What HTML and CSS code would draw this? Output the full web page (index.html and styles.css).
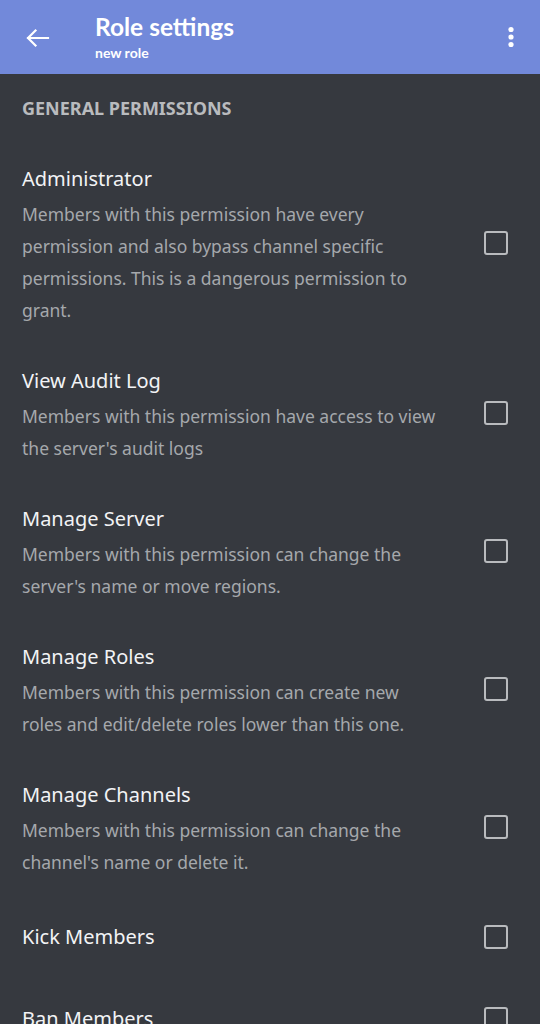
FILE: index.html
```html
<!DOCTYPE html>
<html lang="en">
<head>
    <meta charset="UTF-8">
    <meta name="viewport" content="width=device-width, initial-scale=1.0">
    <title>Role settings</title>
    <link rel="stylesheet" href="styles.css">
</head>
<body>
    <div id="app">
        <div id="topbar">
            <button class="icon-btn back-btn" aria-label="Back">
                <svg width="30" height="30" viewBox="0 0 30 30">
                    <path d="M27 15H7M14.5 7.5L7 15l7.5 7.5" fill="none" stroke="#fff" stroke-width="2.2" stroke-linecap="square"/>
                </svg>
            </button>
            <div class="topbar-titles">
                <div class="topbar-title">Role settings</div>
                <div class="topbar-subtitle">new role</div>
            </div>
            <button class="icon-btn menu-btn" aria-label="More">
                <svg width="10" height="24" viewBox="0 0 10 24">
                    <circle cx="5" cy="4.5" r="2.6" fill="#fff"/>
                    <circle cx="5" cy="12" r="2.6" fill="#fff"/>
                    <circle cx="5" cy="19.5" r="2.6" fill="#fff"/>
                </svg>
            </button>
        </div>

        <div id="permissions">
            <div class="section-title">General Permissions</div>

            <label class="perm">
                <div class="perm-text">
                    <div class="perm-name">Administrator</div>
                    <div class="perm-desc">Members with this permission have every permission and also bypass channel specific permissions. This is a dangerous permission to grant.</div>
                </div>
                <input type="checkbox" class="perm-check">
            </label>

            <label class="perm">
                <div class="perm-text">
                    <div class="perm-name">View Audit Log</div>
                    <div class="perm-desc">Members with this permission have access to view the server's audit logs</div>
                </div>
                <input type="checkbox" class="perm-check">
            </label>

            <label class="perm">
                <div class="perm-text">
                    <div class="perm-name">Manage Server</div>
                    <div class="perm-desc">Members with this permission can change the server's name or move regions.</div>
                </div>
                <input type="checkbox" class="perm-check">
            </label>

            <label class="perm">
                <div class="perm-text">
                    <div class="perm-name">Manage Roles</div>
                    <div class="perm-desc">Members with this permission can create new roles and edit/delete roles lower than this one.</div>
                </div>
                <input type="checkbox" class="perm-check">
            </label>

            <label class="perm">
                <div class="perm-text">
                    <div class="perm-name">Manage Channels</div>
                    <div class="perm-desc">Members with this permission can change the channel's name or delete it.</div>
                </div>
                <input type="checkbox" class="perm-check">
            </label>

            <label class="perm">
                <div class="perm-text">
                    <div class="perm-name">Kick Members</div>
                </div>
                <input type="checkbox" class="perm-check">
            </label>

            <label class="perm">
                <div class="perm-text">
                    <div class="perm-name">Ban Members</div>
                </div>
                <input type="checkbox" class="perm-check">
            </label>
        </div>
    </div>
</body>
</html>
```

FILE: styles.css
```css
body {
    font-family: "Noto Sans", "Open Sans", sans-serif;
    margin: 0;
    padding: 0;
    background-color: #36393f;
    color: #dcddde;
    height: 1024px;
    overflow: hidden;
}

#topbar {
    display: flex;
    align-items: center;
    height: 74px;
    padding: 0 16px 0 21px;
    background-color: #7289da;
    color: #fff;
}

.icon-btn {
    display: flex;
    align-items: center;
    justify-content: center;
    border: none;
    background: transparent;
    padding: 0;
    cursor: pointer;
}

.back-btn {
    width: 30px;
    height: 30px;
    margin-top: 2px;
}

.topbar-titles {
    flex: 1;
    margin-left: 44px;
    font-family: Lato, "Noto Sans", sans-serif;
}

.topbar-title {
    font-size: 24.5px;
    font-weight: 700;
    line-height: 30px;
}

.topbar-subtitle {
    font-size: 14px;
    font-weight: 700;
    line-height: 18px;
    margin-top: 2px;
}

.menu-btn {
    width: 30px;
    height: 30px;
    margin-right: -2px;
}

.section-title {
    padding: 22px 22px;
    font-size: 18px;
    line-height: 24px;
    font-weight: 700;
    text-transform: uppercase;
    color: #b9bbbe;
}

.perm {
    display: flex;
    align-items: center;
    min-height: 46px;
    padding: 18px 32px 18px 22px;
    cursor: pointer;
}

.perm-text {
    flex: 1;
    margin-right: 43px;
}

.perm-name {
    font-size: 20px;
    line-height: 38px;
    color: #f2f3f5;
}

.perm-desc {
    font-size: 17.5px;
    line-height: 32px;
    color: #a5a8ac;
}

.perm-check {
    appearance: none;
    -webkit-appearance: none;
    flex: none;
    width: 24px;
    height: 24px;
    margin: 0;
    border: 2.5px solid #b9bbbe;
    border-radius: 3px;
    background: transparent;
    cursor: pointer;
}

.perm-check:checked {
    background-color: #7289da;
    border-color: #7289da;
}
```
